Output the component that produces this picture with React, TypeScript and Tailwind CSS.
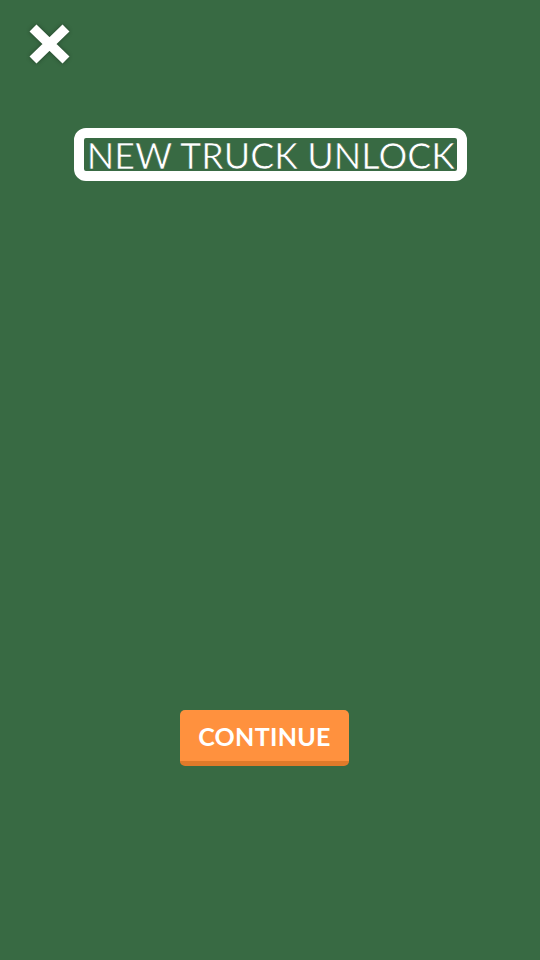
import React from "react";

export default function App() {
  return (
    <div className="relative w-[540px] h-[960px] bg-[#386a43] overflow-hidden" style={{ fontFamily: '"Lato", "Open Sans", sans-serif' }}>
      <div className="flex flex-col items-center h-full">
        <div className="w-full pl-[27px] pt-[23px] h-[128px]">
          <svg width="45" height="42" viewBox="0 0 45 42" className="drop-shadow-[0_0_2px_rgba(0,0,0,0.35)]">
            <path d="M6 5 L39 37 M39 5 L6 37" stroke="#fff" strokeWidth="10" strokeLinecap="butt" />
          </svg>
        </div>
        <div className="border-[10px] border-white rounded-[12px] h-[53px] w-[393px] flex items-center justify-center pl-[2px]">
          <span className="text-white text-[36px] leading-none tracking-[0px] font-normal whitespace-nowrap [-webkit-text-stroke:0.6px_#2e5a38]">NEW TRUCK UNLOCK</span>
        </div>
        <div className="flex-1" />
        <button className="mb-[194px] mr-[11px] w-[169px] h-[56px] rounded-[5px] bg-[#ff913e] border-b-[5px] border-[#e07a2a] text-white text-[25px] font-bold leading-none flex items-center justify-center pt-[1px] tracking-[0.3px]">
          CONTINUE
        </button>
      </div>
    </div>
  );
}
